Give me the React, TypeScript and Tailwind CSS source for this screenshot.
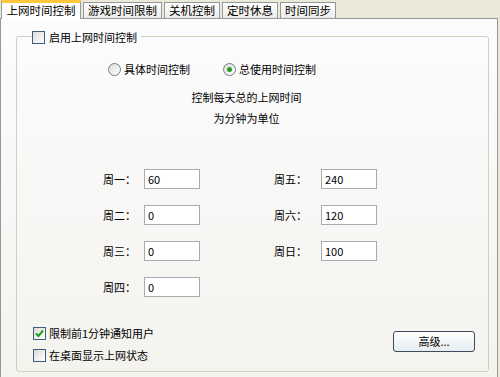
import React from 'react';

const font = { fontFamily: '"Noto Sans CJK SC", "Liberation Sans", sans-serif' };

const tabs = ['上网时间控制', '游戏时间限制', '关机控制', '定时休息', '时间同步'];

function CheckBox({ checked }: { checked?: boolean }) {
  return (
    <span className="flex h-[13px] w-[13px] shrink-0 items-center justify-center border border-[#3d5f80] bg-gradient-to-br from-[#dcdcd6] to-white">
      {checked && (
        <svg width="9" height="9" viewBox="0 0 9 9">
          <path d="M1 4.5 L3.5 7 L8 1.5" stroke="#21a121" strokeWidth="2" fill="none" />
        </svg>
      )}
    </span>
  );
}

function Radio({ checked }: { checked?: boolean }) {
  return (
    <span className="flex h-[13px] w-[13px] shrink-0 items-center justify-center rounded-full border border-[#6b7f90] bg-gradient-to-br from-[#dcdcd6] to-white">
      {checked && <span className="h-[5px] w-[5px] rounded-full bg-[#21a121]" />}
    </span>
  );
}

function DayField({ label, value, wide }: { label: string; value: string; wide?: boolean }) {
  return (
    <div className="flex h-[20px] items-center">
      <span className={`${wide ? 'w-[47px]' : 'w-[41px]'} text-[11px] text-black`}>{label}</span>
      <div className="flex h-[20px] w-[56px] items-center border border-[#a7abb0] bg-white pl-[3px] text-[11px] text-black">
        {value}
      </div>
    </div>
  );
}

export default function App() {
  return (
    <div className="h-[377px] w-[500px] overflow-hidden bg-[#ece9d8]" style={font}>
      {/* tab strip */}
      <div className="flex h-[18px] items-end pl-[1px]">
        {tabs.map((t, i) =>
          i === 0 ? (
            <div
              key={t}
              className="relative z-10 -mb-[1px] flex h-[19px] w-[80px] items-center justify-center border-x border-t-[3px] border-[#919b9c] border-t-[#ffc83c] bg-white text-[11.5px] text-black"
            >
              {t}
            </div>
          ) : (
            <div
              key={t}
              className="ml-[2px] flex h-[16px] items-center border-x border-t border-[#919b9c] bg-gradient-to-b from-white to-[#ecebe6] px-[4px] text-[11.5px] text-black"
            >
              {t}
            </div>
          )
        )}
      </div>

      {/* panel */}
      <div className="h-[360px] w-[498px] border border-[#919b9c] bg-gradient-to-b from-[#fcfcfe] to-[#f4f3ee] pl-[15px] pt-[17px]">
        {/* group box */}
        <div className="relative h-[336px] w-[473px] rounded-[3px] border border-[#d0d0bf]">
          <div className="absolute -top-[8px] left-[15px] flex h-[16px] items-center gap-[4px] bg-[#fcfcfe] pr-[4px] text-[11px] text-black">
            <CheckBox />
            <span>启用上网时间控制</span>
          </div>

          <div className="flex flex-col pt-[24px]">
            <div className="flex h-[16px] items-center pl-[91px] text-[11px] text-black">
              <div className="flex w-[115px] items-center gap-[3px]">
                <Radio />
                <span>具体时间控制</span>
              </div>
              <div className="flex items-center gap-[3px]">
                <Radio checked />
                <span>总使用时间控制</span>
              </div>
            </div>

            <div className="mt-[13px] flex flex-col items-center gap-[6px] pr-[12px] text-[11px] leading-[15px] text-black">
              <span>控制每天总的上网时间</span>
              <span>为分钟为单位</span>
            </div>

            <div className="mt-[43px] grid grid-cols-[171px_auto] gap-y-[16px] pl-[86px]">
              <DayField label="周一：" value="60" />
              <DayField label="周五：" value="240" wide />
              <DayField label="周二：" value="0" />
              <DayField label="周六：" value="120" wide />
              <DayField label="周三：" value="0" />
              <DayField label="周日：" value="100" wide />
              <DayField label="周四：" value="0" />
            </div>

            <div className="mt-[28px] flex items-start justify-between pl-[16px] pr-[13px]">
              <div className="flex flex-col gap-[6px] text-[11px] text-black">
                <div className="flex h-[16px] items-center gap-[3px]">
                  <CheckBox checked />
                  <span>限制前1分钟通知用户</span>
                </div>
                <div className="flex h-[16px] items-center gap-[3px]">
                  <CheckBox />
                  <span>在桌面显示上网状态</span>
                </div>
              </div>
              <button className="mt-[6px] flex h-[21px] w-[82px] items-center justify-center rounded-[3px] border border-[#3c4a5c] bg-gradient-to-b from-white to-[#e6ecf0] text-[11px] text-black">
                高级...
              </button>
            </div>
          </div>
        </div>
      </div>
    </div>
  );
}
